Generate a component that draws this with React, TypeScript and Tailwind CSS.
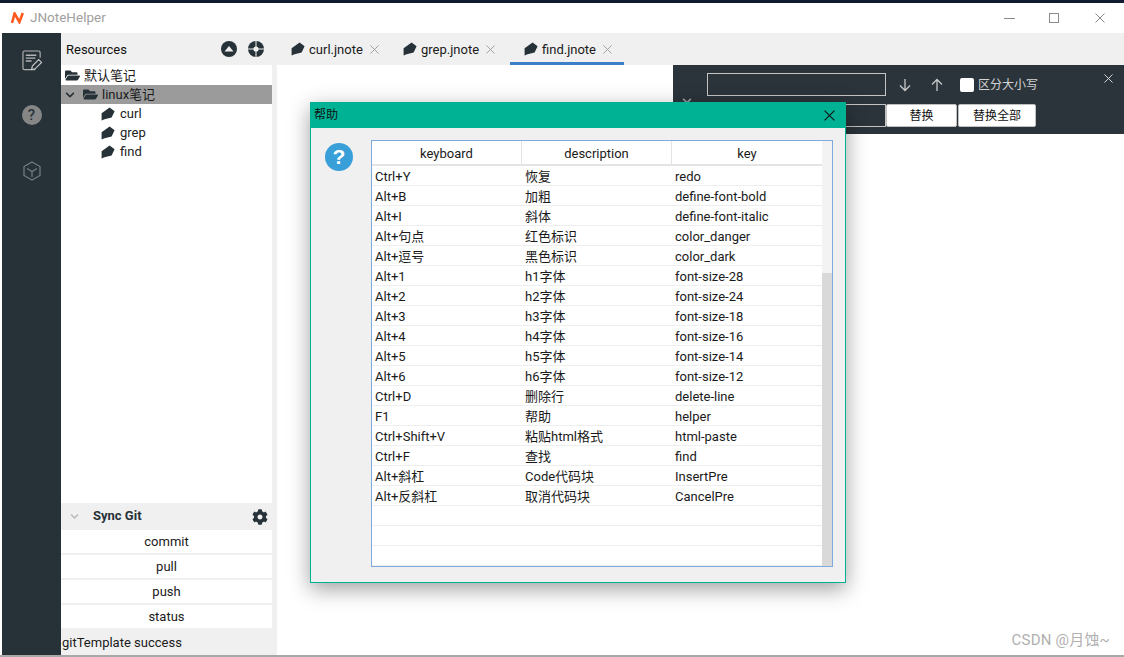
import { FaFolderOpen, FaChevronDown, FaCog } from "react-icons/fa";

const rows: [string, string, string][] = [
  ["Ctrl+Y", "恢复", "redo"],
  ["Alt+B", "加粗", "define-font-bold"],
  ["Alt+I", "斜体", "define-font-italic"],
  ["Alt+句点", "红色标识", "color_danger"],
  ["Alt+逗号", "黑色标识", "color_dark"],
  ["Alt+1", "h1字体", "font-size-28"],
  ["Alt+2", "h2字体", "font-size-24"],
  ["Alt+3", "h3字体", "font-size-18"],
  ["Alt+4", "h4字体", "font-size-16"],
  ["Alt+5", "h5字体", "font-size-14"],
  ["Alt+6", "h6字体", "font-size-12"],
  ["Ctrl+D", "删除行", "delete-line"],
  ["F1", "帮助", "helper"],
  ["Ctrl+Shift+V", "粘贴html格式", "html-paste"],
  ["Ctrl+F", "查找", "find"],
  ["Alt+斜杠", "Code代码块", "InsertPre"],
  ["Alt+反斜杠", "取消代码块", "CancelPre"],
  ["", "", ""],
  ["", "", ""],
  ["", "", ""],
];

function Leaf({ className = "" }: { className?: string }) {
  return (
    <svg viewBox="0 0 14 14" className={`w-[14px] h-[14px] shrink-0 ${className}`}>
      <path d="M8.6 0.6 L13.6 4.2 L10.6 10.6 L3.6 12.2 L0.6 13.6 L0.6 6.2 Z" fill="#263238" />
    </svg>
  );
}

function X({ size, color, w = 1 }: { size: number; color: string; w?: number }) {
  return (
    <svg width={size} height={size} viewBox="0 0 10 10" className="shrink-0">
      <path d="M0.5 0.5 L9.5 9.5 M9.5 0.5 L0.5 9.5" stroke={color} strokeWidth={w} fill="none" />
    </svg>
  );
}

function Tab({ name, active, width }: { name: string; active?: boolean; width: string }) {
  return (
    <div className={`h-full flex items-center pl-[14px] ${width} ${active ? "border-b-[3px] border-[#3a7fc8] pt-[3px]" : ""}`}>
      <Leaf className="mr-[4px]" />
      <span className="mr-[7px]">{name}</span>
      <X size={9} color="#9a9a9a" />
    </div>
  );
}

function GitBtn({ label }: { label: string }) {
  return <div className="h-[23px] bg-white flex items-center justify-center">{label}</div>;
}

export default function App() {
  return (
    <div className="w-[1124px] h-[657px] bg-white flex flex-col overflow-hidden relative text-[13px] leading-none text-[#1a1a1a] font-['Roboto','Noto_Sans_CJK_SC',sans-serif]">
      <div className="h-[3px] bg-[#101b30] shrink-0" />
      {/* title bar */}
      <div className="h-[30px] shrink-0 flex items-center pl-[11px]">
        <svg viewBox="0 0 13 12" className="w-[13px] h-[12px]">
          <path d="M1 11 L3.6 1.5 L8.4 10 L11.8 1" stroke="#ff5a1f" strokeWidth="2.6" fill="none" />
        </svg>
        <span className="ml-[6px] text-[#a0a0a0] text-[13.5px]">JNoteHelper</span>
        <div className="ml-auto flex items-center pr-[19px]">
          <div className="w-[11px] h-px bg-[#8a8a8a]" />
          <div className="ml-[34px] w-[10px] h-[10px] border border-[#8a8a8a]" />
          <div className="ml-[36px]"><X size={10} color="#8a8a8a" /></div>
        </div>
      </div>
      {/* body */}
      <div className="flex-1 flex min-h-0">
        <div className="w-[2px] shrink-0 bg-white" />
        <div className="w-[59px] shrink-0 bg-[#263238] flex flex-col items-center pt-[17px]">
          <svg viewBox="0 0 22 22" className="w-[21px] h-[21px] ml-[1px]">
            <path d="M14 20.5 H2.6 Q1 20.5 1 19 V2.5 Q1 1 2.6 1 H17.4 Q19 1 19 2.5 V8" stroke="#b4b4b4" strokeWidth="1.2" fill="none" />
            <path d="M4 5.5 H15 M4 8.5 H14 M4 11.5 H10" stroke="#b4b4b4" strokeWidth="1.4" fill="none" />
            <path d="M10 20.5 L10.8 16.8 L17.5 10 L20.5 13 L13.7 19.7 Z" stroke="#c8c8c8" strokeWidth="1.2" fill="#263238" />
          </svg>
          <div className="mt-[34px] w-[20px] h-[20px] rounded-full bg-[#868686] flex items-center justify-center text-[15px] font-medium text-[#263238]">?</div>
          <svg viewBox="0 0 20 20" className="mt-[36px] w-[20px] h-[20px]">
            <path d="M10 1 L18 5.5 V14.5 L10 19 L2 14.5 V5.5 Z" stroke="#767e82" strokeWidth="1.2" fill="none" />
            <path d="M5 7.5 L10 10.5 L15 7.5 M10 10.5 V16" stroke="#767e82" strokeWidth="1.2" fill="none" />
          </svg>
        </div>
        {/* resources panel */}
        <div className="w-[211px] shrink-0 flex flex-col bg-white">
          <div className="h-[32px] shrink-0 bg-[#f0f0f0] flex items-center pl-[5px]">
            <span className="text-[#111]">Resources</span>
            <svg viewBox="0 0 16 16" className="ml-auto w-[16px] h-[16px]">
              <circle cx="8" cy="8" r="8" fill="#263238" />
              <path d="M3.5 10.5 L8 5 L12.5 10.5 Z" fill="#f0f0f0" />
            </svg>
            <svg viewBox="0 0 16 16" className="ml-[11px] mr-[8px] w-[16px] h-[16px]">
              <circle cx="8" cy="8" r="8" fill="#263238" />
              <path d="M8 0 V16 M0 8 H16" stroke="#f0f0f0" strokeWidth="1" />
              <circle cx="8" cy="8" r="2.6" fill="#f0f0f0" />
            </svg>
          </div>
          <div className="h-[19px] mt-px flex items-center pl-[4px]">
            <FaFolderOpen size={15} color="#263238" />
            <span className="ml-[4px]">默认笔记</span>
          </div>
          <div className="h-[19px] bg-[#9b9b9b] flex items-center pl-[4px]">
            <FaChevronDown size={10} color="#263238" />
            <div className="ml-[8px]"><FaFolderOpen size={15} color="#263238" /></div>
            <span className="ml-[4px]">linux笔记</span>
          </div>
          {["curl", "grep", "find"].map((n) => (
            <div key={n} className="h-[19px] flex items-center pl-[40px]">
              <Leaf />
              <span className="ml-[5px] text-[#222]">{n}</span>
            </div>
          ))}
          <div className="flex-1" />
          <div className="h-[27px] shrink-0 bg-[#f0f0f0] flex items-center pl-[9px] pr-[4px]">
            <FaChevronDown size={9} color="#b8b8b8" />
            <span className="ml-[14px] mb-[2px] font-bold text-[13px] text-[#263238]">Sync Git</span>
            <div className="ml-auto"><FaCog size={16} color="#263238" /></div>
          </div>
          <div className="flex flex-col gap-[2px] bg-[#f0f0f0]">
            <GitBtn label="commit" />
            <GitBtn label="pull" />
            <GitBtn label="push" />
            <GitBtn label="status" />
          </div>
          <div className="h-[27px] shrink-0 bg-[#f0f0f0] flex items-center pl-px pt-[1px]">gitTemplate success</div>
        </div>
        <div className="w-[5px] shrink-0 bg-[#f0f0f0]" />
        {/* editor */}
        <div className="flex-1 flex flex-col min-w-0">
          <div className="h-[32px] shrink-0 bg-[#f0f0f0] flex items-center">
            <Tab name="curl.jnote" width="w-[112px]" />
            <Tab name="grep.jnote" width="w-[121px]" />
            <Tab name="find.jnote" active width="w-[114px]" />
          </div>
          <div className="flex justify-end">
            <div className="w-[451px] h-[69px] bg-[#2b343b] flex flex-col pl-[34px] pt-[8px] relative">
              <div className="flex items-center h-[23px]">
                <div className="w-[179px] h-[23px] border border-[#c4c4c4]" />
                <svg viewBox="0 0 12 14" className="ml-[13px] w-[12px] h-[14px]">
                  <path d="M6 1 V12.5 M1 7.5 L6 12.5 L11 7.5" stroke="#c8c8c8" strokeWidth="1.3" fill="none" />
                </svg>
                <svg viewBox="0 0 12 14" className="ml-[20px] w-[12px] h-[14px]">
                  <path d="M6 13 V1.5 M1 6.5 L6 1.5 L11 6.5" stroke="#c8c8c8" strokeWidth="1.3" fill="none" />
                </svg>
                <div className="ml-[17px] w-[14px] h-[14px] rounded-[2px] bg-white" />
                <span className="ml-[4px] text-[12px] text-[#d4d4d4]">区分大小写</span>
              </div>
              <div className="absolute right-[11px] top-[9px]"><X size={9} color="#e8e8e8" /></div>
              <div className="absolute left-[9px] top-[31px]"><FaChevronDown size={10} color="#9a9fa2" /></div>
              <div className="flex items-center h-[23px] mt-[8px] text-[12px]">
                <div className="w-[179px] h-[23px] border border-[#c4c4c4]" />
                <div className="w-[71px] h-[23px] bg-white border border-[#c0c0c0] rounded-[2px] flex items-center justify-center text-[#111]">替换</div>
                <div className="ml-px w-[78px] h-[23px] bg-white border border-[#c0c0c0] rounded-[2px] flex items-center justify-center text-[#111]">替换全部</div>
              </div>
            </div>
          </div>
          <div className="flex-1" />
        </div>
      </div>
      <div className="h-[2px] shrink-0 bg-[#a8a8a8]" />

      {/* help dialog */}
      <div className="absolute left-[310px] top-[102px] w-[536px] h-[481px] border border-[#00b294] bg-[#f0f0f0] flex flex-col shadow-[0_6px_20px_rgba(0,0,0,0.38)]">
        <div className="h-[25px] shrink-0 bg-[#00b294] flex items-center pl-[3px] pr-[10px] pb-[1px] text-[12px] text-[#111]">
          <span>帮助</span>
          <div className="ml-auto"><X size={11} color="#111" /></div>
        </div>
        <div className="flex flex-1 pt-[12px] pl-[14px]">
          <svg viewBox="0 0 28 28" className="w-[28px] h-[28px] mt-[3px] shrink-0">
            <circle cx="14" cy="14" r="14" fill="#389fd8" />
            <text x="14" y="21" textAnchor="middle" fontSize="21" fontWeight="900" fill="#fff" fontFamily="Liberation Sans, sans-serif">?</text>
          </svg>
          <div className="ml-[18px] w-[462px] h-[427px] border border-[#7fabdc] bg-white flex">
            <div className="w-[450px] flex flex-col">
              <div className="h-[25px] shrink-0 grid grid-cols-[150px_150px_150px] border-b-2 border-[#e4e4e4]">
                <div className="flex items-center justify-center border-r border-[#e4e4e4] pt-[2px]">keyboard</div>
                <div className="flex items-center justify-center border-r border-[#e4e4e4] pt-[2px]">description</div>
                <div className="flex items-center justify-center pt-[2px]">key</div>
              </div>
              {rows.map((r, i) => (
                <div key={i} className="h-[20px] shrink-0 grid grid-cols-[150px_150px_150px] border-b border-[#eeeeee] items-center pt-[2px]">
                  <div className="pl-[3px]">{r[0]}</div>
                  <div className="pl-[3px]">{r[1]}</div>
                  <div className="pl-[3px]">{r[2]}</div>
                </div>
              ))}
            </div>
            <div className="w-[10px] flex flex-col">
              <div className="h-[132px] bg-[#f3f3f3]" />
              <div className="flex-1 bg-[#d9d9d9]" />
            </div>
          </div>
        </div>
      </div>

      <div className="absolute right-[14px] bottom-[9px] text-[15px] tracking-[0.2px] text-[#b0b0b0]">CSDN @月蚀~</div>
    </div>
  );
}
